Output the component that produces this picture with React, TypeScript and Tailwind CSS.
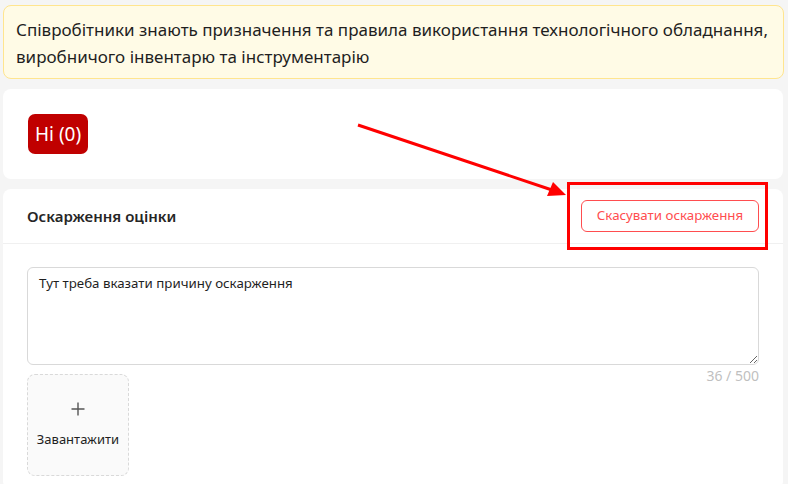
import React from 'react'

const FONT = { fontFamily: '"Noto Sans", "Open Sans", sans-serif' }

function Annotation() {
  return (
    <svg className="absolute inset-0 pointer-events-none" width="788" height="484" viewBox="0 0 788 484">
      <line x1="358" y1="125" x2="552" y2="190" stroke="#ff0000" strokeWidth="3" />
      <polygon points="566,195 547,196 553,182" fill="#ff0000" />
      <rect x="568.5" y="183.5" width="198" height="65" fill="none" stroke="#ff0000" strokeWidth="3" />
    </svg>
  )
}

export default function App() {
  return (
    <div className="relative w-[788px] h-[484px] overflow-hidden bg-[#f5f5f5] px-[3px] pt-[5px]" style={FONT}>
      <div className="flex flex-col gap-[10px] w-[781px]">
        {/* notice */}
        <div className="rounded-lg border border-[#ffe58f] bg-[#fffbe6] px-[12px] pt-[10px] pb-[8px] text-[17px] leading-[27px] text-[#1f1f1f]">
          Співробітники знають призначення та правила використання технологічного обладнання, виробничого інвентарю та інструментарію
        </div>

        {/* answer */}
        <div className="rounded-lg bg-white px-[25px] py-[25px] h-[90px] w-[780px]">
          <button className="h-[40px] px-[7px] rounded-[7px] bg-[#c00000] text-white text-[19px] leading-[40px]">
            Hi (0)
          </button>
        </div>

        {/* appeal */}
        <div className="rounded-lg bg-white w-[780px] h-[300px]">
          <div className="flex items-center justify-between h-[55px] px-[24px] border-b border-[#f0f0f0]">
            <span className="text-[15px] font-semibold text-[#262626]">Оскарження оцінки</span>
            <button className="h-[32px] w-[178px] rounded-[6px] border border-[#ff4d4f] text-[#ff4d4f] text-[13.3px] bg-white">
              Скасувати оскарження
            </button>
          </div>
          <div className="px-[24px] pt-[23px]">
            <textarea
              className="block w-[732px] h-[98px] rounded-[6px] border border-[#d9d9d9] px-[11px] py-[4px] text-[13.3px] leading-[22px] text-[#1f1f1f] outline-none"
              defaultValue="Тут треба вказати причину оскарження"
              style={FONT}
            />
            <div className="flex items-start justify-between w-[732px]">
              <div className="mt-[9px] w-[102px] h-[102px] rounded-lg border border-dashed border-[#d9d9d9] bg-[#fafafa] flex flex-col items-center justify-center gap-[14px]">
                <svg width="14" height="14" viewBox="0 0 14 14">
                  <path d="M7 0.5V13.5M0.5 7H13.5" stroke="#555" strokeWidth="1.4" />
                </svg>
                <span className="text-[13px] leading-[18px] text-[#1f1f1f]">Завантажити</span>
              </div>
              <span className="text-[14px] leading-[22px] text-[#bfbfbf]">36 / 500</span>
            </div>
          </div>
        </div>
      </div>
      <Annotation />
    </div>
  )
}
